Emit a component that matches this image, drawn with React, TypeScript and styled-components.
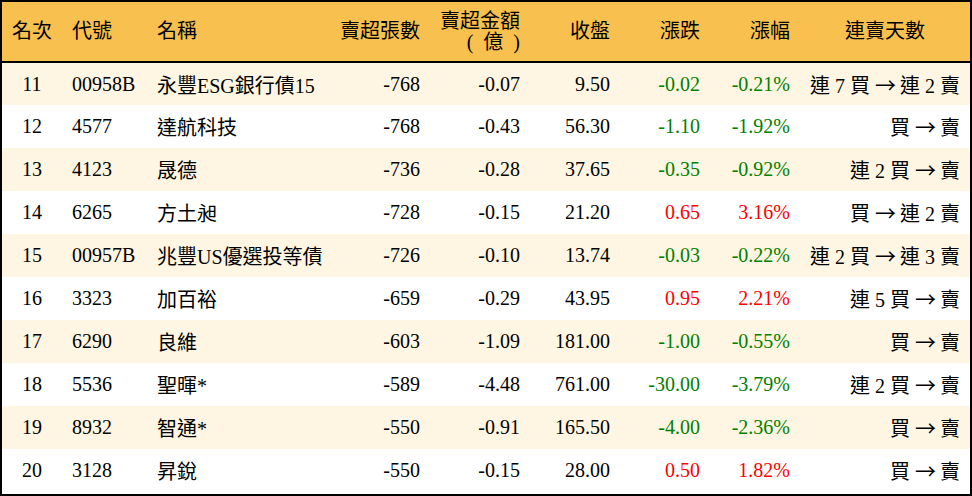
import styled, { createGlobalStyle } from "styled-components";

const GlobalStyle = createGlobalStyle`
  html, body {
    margin: 0;
    padding: 0;
    background: #ffffff;
  }
  body {
    font-family: "Liberation Serif", "Noto Sans CJK TC", serif;
  }
`;

interface RowData {
  rank: number;
  code: string;
  name: string;
  shares: string;
  amount: string;
  close: string;
  change: string;
  pct: string;
  from: string;
  to: string;
}

const rows: RowData[] = [
  { rank: 11, code: "00958B", name: "永豐ESG銀行債15", shares: "-768", amount: "-0.07", close: "9.50", change: "-0.02", pct: "-0.21%", from: "連 7 買", to: "連 2 賣" },
  { rank: 12, code: "4577", name: "達航科技", shares: "-768", amount: "-0.43", close: "56.30", change: "-1.10", pct: "-1.92%", from: "買", to: "賣" },
  { rank: 13, code: "4123", name: "晟德", shares: "-736", amount: "-0.28", close: "37.65", change: "-0.35", pct: "-0.92%", from: "連 2 買", to: "賣" },
  { rank: 14, code: "6265", name: "方土昶", shares: "-728", amount: "-0.15", close: "21.20", change: "0.65", pct: "3.16%", from: "買", to: "連 2 賣" },
  { rank: 15, code: "00957B", name: "兆豐US優選投等債", shares: "-726", amount: "-0.10", close: "13.74", change: "-0.03", pct: "-0.22%", from: "連 2 買", to: "連 3 賣" },
  { rank: 16, code: "3323", name: "加百裕", shares: "-659", amount: "-0.29", close: "43.95", change: "0.95", pct: "2.21%", from: "連 5 買", to: "賣" },
  { rank: 17, code: "6290", name: "良維", shares: "-603", amount: "-1.09", close: "181.00", change: "-1.00", pct: "-0.55%", from: "買", to: "賣" },
  { rank: 18, code: "5536", name: "聖暉*", shares: "-589", amount: "-4.48", close: "761.00", change: "-30.00", pct: "-3.79%", from: "連 2 買", to: "賣" },
  { rank: 19, code: "8932", name: "智通*", shares: "-550", amount: "-0.91", close: "165.50", change: "-4.00", pct: "-2.36%", from: "買", to: "賣" },
  { rank: 20, code: "3128", name: "昇銳", shares: "-550", amount: "-0.15", close: "28.00", change: "0.50", pct: "1.82%", from: "買", to: "賣" },
];

const Frame = styled.div`
  width: 972px;
  height: 496px;
  box-sizing: border-box;
  border: 2px solid #000;
  overflow: hidden;
`;

const Table = styled.table`
  width: 100%;
  border-collapse: collapse;
  table-layout: fixed;
  font-size: 20px;
  color: #000;
`;

const HeadRow = styled.tr`
  height: 60px;
  background: #f8c04f;
  border-bottom: 2px solid #000;
`;

type Align = "left" | "right" | "center";

const Th = styled.th<{ $align: Align; $pad?: number }>`
  font-weight: normal;
  text-align: ${(p) => p.$align};
  padding: 0 ${(p) => (p.$align === "right" ? p.$pad ?? 10 : 0)}px 0
    ${(p) => (p.$align === "left" ? p.$pad ?? 10 : 0)}px;
  line-height: 21px;
  vertical-align: middle;
  white-space: nowrap;
`;

const Unit = styled.span`
  display: inline-block;
  letter-spacing: 2px;
  word-spacing: 1px;
  margin-right: -2px;
`;

const BodyRow = styled.tr<{ $shade: boolean }>`
  height: 43px;
  background: ${(p) => (p.$shade ? "#fef6e2" : "#ffffff")};
`;

const Td = styled.td<{ $align: Align; $pad?: number; $tone?: "up" | "down" }>`
  text-align: ${(p) => p.$align};
  padding: 0 ${(p) => (p.$align === "right" ? p.$pad ?? 10 : 0)}px 0
    ${(p) => (p.$align === "left" ? p.$pad ?? 10 : 0)}px;
  vertical-align: middle;
  white-space: nowrap;
  color: ${(p) => (p.$tone === "up" ? "#ff0000" : p.$tone === "down" ? "#008000" : "#000")};
`;

const Arrow = styled.span`
  display: inline-block;
  margin: 0 4px 0 5px;
  font-family: "Noto Sans CJK TC", sans-serif;
  font-size: 21px;
  line-height: 20px;
`;

const tone = (v: string) => (v.startsWith("-") ? "down" : "up");

export default function App() {
  return (
    <>
      <GlobalStyle />
      <Frame>
        <Table>
          <colgroup>
            <col style={{ width: 60 }} />
            <col style={{ width: 85 }} />
            <col style={{ width: 183 }} />
            <col style={{ width: 100 }} />
            <col style={{ width: 100 }} />
            <col style={{ width: 90 }} />
            <col style={{ width: 90 }} />
            <col style={{ width: 90 }} />
            <col style={{ width: 170 }} />
          </colgroup>
          <thead>
            <HeadRow>
              <Th $align="center">名次</Th>
              <Th $align="left">代號</Th>
              <Th $align="left">名稱</Th>
              <Th $align="right">賣超張數</Th>
              <Th $align="right">
                賣超金額
                <br />
                <Unit>( 億 )</Unit>
              </Th>
              <Th $align="right">收盤</Th>
              <Th $align="right">漲跌</Th>
              <Th $align="right">漲幅</Th>
              <Th $align="center">連賣天數</Th>
            </HeadRow>
          </thead>
          <tbody>
            {rows.map((r, i) => (
              <BodyRow key={r.rank} $shade={i % 2 === 0}>
                <Td $align="center">{r.rank}</Td>
                <Td $align="left">{r.code}</Td>
                <Td $align="left">{r.name}</Td>
                <Td $align="right">{r.shares}</Td>
                <Td $align="right">{r.amount}</Td>
                <Td $align="right">{r.close}</Td>
                <Td $align="right" $tone={tone(r.change)}>{r.change}</Td>
                <Td $align="right" $tone={tone(r.pct)}>{r.pct}</Td>
                <Td $align="right" $pad={10}>
                  {r.from}
                  <Arrow>→</Arrow>
                  {r.to}
                </Td>
              </BodyRow>
            ))}
          </tbody>
        </Table>
      </Frame>
    </>
  );
}
